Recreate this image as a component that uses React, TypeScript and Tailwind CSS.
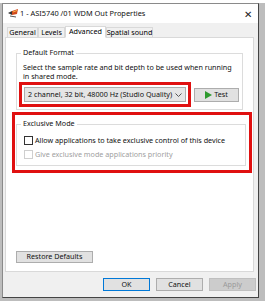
import { useState } from 'react'

const font = { fontFamily: '"Noto Sans", "Open Sans", sans-serif' }

const tabs = [
  { label: 'General', w: 'w-[31px]' },
  { label: 'Levels', w: 'w-[27px]' },
  { label: 'Advanced', w: 'w-[41px]' },
  { label: 'Spatial sound', w: 'w-[47px]' },
]

const SpeakerIcon = () => (
  <svg width="11" height="9" viewBox="0 0 11 9">
    <path d="M0 4 L4 2 L4 6 Z" fill="#333" />
    <path d="M4 2 L10 0 L9 5 L4 6 Z" fill="#d24a1c" />
    <path d="M5 3 L9 1.5" stroke="#f6b54a" strokeWidth="1" />
    <path d="M2 7 L8 8" stroke="#555" strokeWidth="1" />
  </svg>
)

const Checkbox = ({ checked, disabled, label, onClick }: { checked: boolean; disabled?: boolean; label: string; onClick?: () => void }) => (
  <div className="flex items-center gap-[2px] cursor-default whitespace-nowrap" onClick={disabled ? undefined : onClick}>
    <div
      className={`w-[9px] h-[9px] border bg-white flex items-center justify-center ${
        disabled ? 'border-[#cfcfcf]' : 'border-[#333]'
      }`}
    >
      {checked && <span className="text-[7px] leading-none">✓</span>}
    </div>
    <span className={`text-[7.2px] leading-none ${disabled ? 'text-[#a0a0a0]' : 'text-[#111]'}`}>{label}</span>
  </div>
)

export default function App() {
  const [exclusive, setExclusive] = useState(false)

  return (
    <div className="w-[265px] h-[301px] bg-[#bdbdbd] overflow-hidden" style={font}>
      <div className="h-[3px] bg-white" />
      <div className="ml-[2px] w-[257px] h-[295px] bg-[#f0f0f0] border border-[#8a8a8a] border-r-[#444] border-b-[#444] flex flex-col">
        {/* Title bar */}
        <div className="h-[19px] bg-white flex items-center pl-[5px] pr-[6px]">
          <SpeakerIcon />
          <span className="ml-[1px] text-[7.4px] text-[#111] whitespace-nowrap">1 - ASI5740 /01 WDM Out Properties</span>
          <span className="ml-auto text-[10px] leading-none text-[#222]">✕</span>
        </div>

        {/* Tabs */}
        <div className="flex items-end ml-[4px] mt-[2px] h-[12px]">
          {tabs.map((t) => (
            <div
              key={t.label}
              className={`${t.w} text-[7.2px] leading-none flex items-center justify-center border border-[#d9d9d9] whitespace-nowrap ${
                t.label === 'Advanced'
                  ? 'h-[12px] bg-white border-b-white -mb-px relative z-10'
                  : 'h-[10px] bg-[#f0f0f0] border-b-0'
              }`}
            >
              {t.label}
            </div>
          ))}
        </div>

        {/* Panel */}
        <div className="ml-[2px] w-[249px] h-[235px] bg-white border border-[#d9d9d9] flex flex-col">
          {/* Default Format */}
          <div className="relative mx-[10px] mt-[15px] h-[57px] border border-[#dcdcdc]">
            <span className="absolute -top-[5px] left-[4px] bg-white px-[2px] text-[7.2px] leading-none text-[#111]">Default Format</span>
            <p className="mt-[9px] ml-[6px] text-[7.2px] leading-[8.5px] text-[#111] w-[212px]">
              Select the sample rate and bit depth to be used when running in shared mode.
            </p>
            <div className="flex items-center mt-[2px] ml-[2px]">
              <div className="border-[3px] border-[#e01010] p-[2px]">
                <div className="w-[162px] h-[15px] bg-[#e5e5e5] border border-[#adadad] flex items-center px-[3px] whitespace-nowrap">
                  <span className="text-[7.2px] leading-none text-[#111]">2 channel, 32 bit, 48000 Hz (Studio Quality)</span>
                  <svg className="ml-auto" width="7" height="4" viewBox="0 0 7 4">
                    <path d="M0.5 0.5 L3.5 3.5 L6.5 0.5" stroke="#555" fill="none" />
                  </svg>
                </div>
              </div>
              <button className="ml-[3px] w-[45px] h-[14px] bg-[#e1e1e1] border border-[#adadad] flex items-center justify-center gap-[2px]">
                <svg width="7" height="8" viewBox="0 0 7 8">
                  <path d="M0 0 L7 4 L0 8 Z" fill="#2e9a2e" />
                </svg>
                <span className="text-[7.2px] leading-none text-[#111]">Test</span>
              </button>
            </div>
          </div>

          {/* Exclusive Mode */}
          <div className="ml-[6px] mr-[1px] mt-[2px] border-[3px] border-[#e01010] pl-[1px] pr-[3px] pt-[9px] pb-[4px]">
            <div className="relative h-[42px] border border-[#dcdcdc] flex flex-col gap-[5px] pl-[7px] pt-[11px]">
              <span className="absolute -top-[5px] left-[4px] bg-white px-[2px] text-[7.2px] leading-none text-[#111]">Exclusive Mode</span>
              <Checkbox checked={exclusive} label="Allow applications to take exclusive control of this device" onClick={() => setExclusive(!exclusive)} />
              <Checkbox checked={false} disabled label="Give exclusive mode applications priority" />
            </div>
          </div>

          <div className="flex-1" />
          <button className="ml-[10px] mb-[8px] w-[77px] h-[12px] bg-[#e1e1e1] border border-[#adadad] text-[7.2px] leading-none text-[#111]">
            Restore Defaults
          </button>
        </div>

        {/* Footer buttons */}
        <div className="flex justify-end gap-[6px] mt-[6px] mr-[2px]">
          <button className="w-[47px] h-[13px] bg-[#e1e1e1] border border-[#0078d7] text-[7.2px] leading-none text-[#111]">OK</button>
          <button className="w-[47px] h-[13px] bg-[#e1e1e1] border border-[#adadad] text-[7.2px] leading-none text-[#111]">Cancel</button>
          <button className="w-[47px] h-[13px] bg-[#cccccc] border border-[#bfbfbf] text-[7.2px] leading-none text-[#9a9a9a]">Apply</button>
        </div>
      </div>
    </div>
  )
}
